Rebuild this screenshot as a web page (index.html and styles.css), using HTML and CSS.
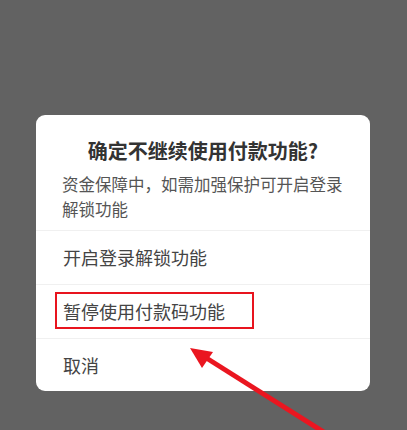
FILE: index.html
```html
<!doctype html>
<html>

<head>
    <meta charset="utf-8">
    <meta name="viewport" content="width=device-width, initial-scale=1">
    <title>确定不继续使用付款功能</title>
    <link rel="stylesheet" href="styles.css">
</head>

<body>
    <div class="mask">
        <div class="dialog">
            <div class="dialog-head">
                <h3 class="title">确定不继续使用付款功能?</h3>
                <p class="desc">资金保障中，如需加强保护可开启登录解锁功能</p>
            </div>
            <div class="item">开启登录解锁功能</div>
            <div class="item">暂停使用付款码功能</div>
            <div class="item">取消</div>
        </div>
    </div>
    <!-- 标注 -->
    <div class="mark-box"></div>
    <svg class="mark-arrow" width="407" height="430" viewBox="0 0 407 430">
        <line x1="330" y1="436" x2="200" y2="354" stroke="#ea1620" stroke-width="5" />
        <polygon points="190,348 213,352 202,368" fill="#ea1620" />
    </svg>
</body>

</html>
```

FILE: styles.css
```css
html, body {
    margin: 0;
    height: 100%;
    overflow: hidden;
    background-color: #626262;
    font-family: "Noto Sans CJK SC", "Noto Sans", sans-serif;
}
.mask {
    padding-top: 115px;
}
.dialog {
    width: 334px;
    margin-left: 36px;
    background-color: #fff;
    border-radius: 9px;
    overflow: hidden;
}
.dialog-head {
    padding: 22px 26px 8px;
    border-bottom: 1px solid #f0f0f0;
}
.title {
    margin: 0;
    font-size: 20px;
    line-height: 28px;
    font-weight: bold;
    color: #333;
    text-align: center;
}
.desc {
    margin: 7px 0 0;
    font-size: 16.5px;
    line-height: 25px;
    color: #555;
}
.item {
    height: 53px;
    line-height: 53px;
    padding-left: 27px;
    font-size: 18px;
    color: #444;
    border-bottom: 1px solid #f0f0f0;
}
.item:last-child {
    border-bottom: none;
    height: 52px;
}
.mark-box {
    position: absolute;
    left: 55px;
    top: 292px;
    width: 195px;
    height: 33px;
    border: 2px solid #e8141e;
}
.mark-arrow {
    position: absolute;
    left: 0;
    top: 0;
}
```
